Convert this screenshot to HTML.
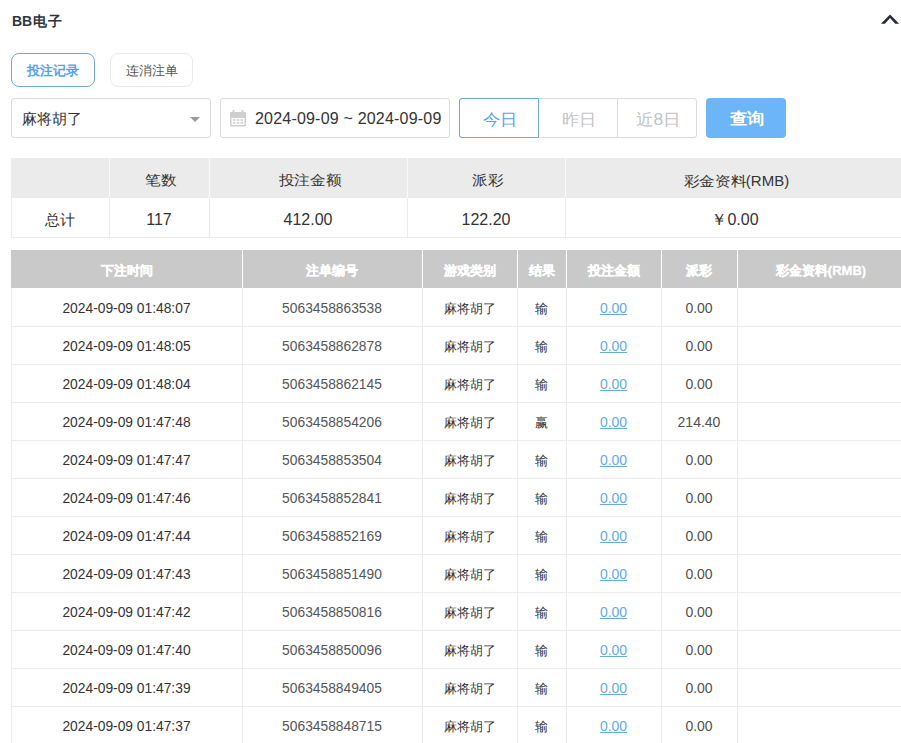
<!DOCTYPE html>
<html><head><meta charset="utf-8"><style>
*{box-sizing:border-box;margin:0;padding:0}
html,body{width:901px;height:743px;overflow:hidden;background:#fff}
body{position:relative;font-family:"Liberation Sans",sans-serif;color:#333}
.a{position:absolute;white-space:nowrap}
.title{left:12px;top:10px;font-size:14px;font-weight:bold;color:#2f3441;line-height:22px}
.tab{top:53px;height:34px;border-radius:8px;font-size:13px;line-height:34px;text-align:center}
.tab1{left:11px;width:84px;border:1px solid #74a5d8;color:#55a3ef;font-weight:bold}
.tab2{left:110px;width:83px;border:1px solid #e9e9e9;color:#555}
.sel{left:11px;top:98px;width:200px;height:40px;border:1px solid #dadada;border-radius:3px}
.selt{left:22px;top:109px;font-size:15px;line-height:20px;color:#333}
.tri{left:190px;top:117px;width:0;height:0;border-left:5px solid transparent;border-right:5px solid transparent;border-top:5px solid #9a9a9a}
.date{left:220px;top:98px;width:230px;height:40px;border:1px solid #dadada;border-radius:3px}
.datet{left:255px;top:109px;font-size:16px;line-height:20px;letter-spacing:0.2px;color:#333}
.grp{left:459px;top:98px;width:238px;height:40px;border:1px solid #dadada;border-radius:3px}
.gd{top:99px;width:1px;height:38px;background:#dadada}
.today{left:459px;top:98px;width:80px;height:40px;border:1px solid #74a5d8;border-radius:3px 0 0 3px}
.bt{top:109.5px;font-size:16px;line-height:20px;color:#c3c3c3;padding-left:2px}
.query{left:706px;top:98px;width:80px;height:40px;background:#6cb6f7;border-radius:4px}
.qt{left:730px;top:108.5px;font-size:16px;line-height:20px;color:#fff;font-weight:bold;padding-left:2px}
.c{text-align:center}
.sh{background:#ebebeb}
.vl{width:1px}
.hl{height:1px}
.lnk{color:#66a9e8;text-decoration:underline}
</style></head><body>
<div class="a title" style="">BB<span style="letter-spacing:1.2px;margin-left:1px">电子</span></div>
<svg class="a" style="left:861px;top:0px" width="40" height="40" viewBox="0 0 40 40"><path d="M19.9 23.8 L29.05 14.4 L38.2 23.8 L34.2 23.8 L29.05 17.9 L23.9 23.8 Z" fill="#272c37"/></svg>
<div class="a tab tab1" style="">投注记录</div>
<div class="a tab tab2" style="">连消注单</div>
<div class="a sel" style=""></div>
<div class="a selt" style="">麻将胡了</div>
<div class="a tri" style=""></div>
<div class="a date" style=""></div>
<svg class="a" style="left:229px;top:110px" width="18" height="18" viewBox="0 0 18 18">
<rect x="1" y="2" width="16" height="14.5" rx="1" fill="#cfcfcf"/>
<rect x="2.5" y="8" width="13" height="7" fill="#fff"/>
<rect x="4" y="9" width="2.5" height="2" fill="#d8d8d8"/><rect x="7.8" y="9" width="2.5" height="2" fill="#d8d8d8"/><rect x="11.5" y="9" width="2.5" height="2" fill="#d8d8d8"/>
<rect x="4" y="12" width="2.5" height="2" fill="#d8d8d8"/><rect x="7.8" y="12" width="2.5" height="2" fill="#d8d8d8"/><rect x="11.5" y="12" width="2.5" height="2" fill="#d8d8d8"/>
<rect x="3.5" y="0" width="2" height="4" fill="#cfcfcf"/><rect x="12.5" y="0" width="2" height="4" fill="#cfcfcf"/>
</svg>
<div class="a datet" style="">2024-09-09 ~ 2024-09-09</div>
<div class="a grp" style=""></div>
<div class="a gd" style="left:617px"></div>
<div class="a today" style=""></div>
<div class="a bt c" style="left:459px;width:80px;color:#55a3ef"><span style="display:inline-block;transform:scaleX(1.08)">今日</span></div>
<div class="a bt c" style="left:539px;width:78px"><span style="display:inline-block;transform:scaleX(1.08)">昨日</span></div>
<div class="a bt c" style="left:617px;width:80px"><span style="display:inline-block;transform:scaleX(1.1)">近8日</span></div>
<div class="a query" style=""></div>
<div class="a qt c" style="left:706px;width:80px"><span style="display:inline-block;transform:scaleX(1.08)">查询</span></div>
<div class="a sh" style="left:11px;top:158px;width:894px;height:40px"></div>
<div class="a vl" style="left:109px;top:158px;height:40px;background:#fafafa"></div>
<div class="a vl" style="left:209px;top:158px;height:40px;background:#fafafa"></div>
<div class="a vl" style="left:407px;top:158px;height:40px;background:#fafafa"></div>
<div class="a vl" style="left:565px;top:158px;height:40px;background:#fafafa"></div>
<div class="a vl" style="left:11px;top:198px;height:40px;background:#ebebeb"></div>
<div class="a vl" style="left:109px;top:198px;height:40px;background:#ebebeb"></div>
<div class="a vl" style="left:209px;top:198px;height:40px;background:#ebebeb"></div>
<div class="a vl" style="left:407px;top:198px;height:40px;background:#ebebeb"></div>
<div class="a vl" style="left:565px;top:198px;height:40px;background:#ebebeb"></div>
<div class="a hl" style="left:11px;top:237px;width:894px;background:#ebebeb"></div>
<div class="a c" style="left:11px;width:98px;top:208.5px;line-height:22px;font-size:15px;color:#333">总计</div>
<div class="a c" style="left:109px;width:100px;top:169.5px;line-height:22px;font-size:13.5px;color:#333;padding-left:3px"><span style="display:inline-block;transform:scaleX(1.12)">笔数</span></div>
<div class="a c" style="left:109px;width:100px;top:208.5px;line-height:22px;font-size:16px;color:#333">117</div>
<div class="a c" style="left:209px;width:198px;top:169.5px;line-height:22px;font-size:13.5px;color:#333;padding-left:3px"><span style="display:inline-block;transform:scaleX(1.12)">投注金额</span></div>
<div class="a c" style="left:209px;width:198px;top:208.5px;line-height:22px;font-size:16px;color:#333">412.00</div>
<div class="a c" style="left:407px;width:158px;top:169.5px;line-height:22px;font-size:13.5px;color:#333;padding-left:3px"><span style="display:inline-block;transform:scaleX(1.12)">派彩</span></div>
<div class="a c" style="left:407px;width:158px;top:208.5px;line-height:22px;font-size:16px;color:#333">122.20</div>
<div class="a c" style="left:565px;width:340px;top:169.5px;line-height:22px;font-size:13.5px;color:#333;padding-left:3px"><span style="display:inline-block;transform:scaleX(1.12);margin:0 3px">彩金资料</span><span style="font-size:15px">(RMB)</span></div>
<div class="a c" style="left:565px;width:340px;top:208.5px;line-height:22px;font-size:16px;color:#333">￥0.00</div>
<div class="a " style="left:11px;top:250px;width:894px;height:38px;background:#c9c9c9"></div>
<div class="a vl" style="left:242px;top:250px;height:38px;background:#fff"></div>
<div class="a vl" style="left:422px;top:250px;height:38px;background:#fff"></div>
<div class="a vl" style="left:517px;top:250px;height:38px;background:#fff"></div>
<div class="a vl" style="left:566px;top:250px;height:38px;background:#fff"></div>
<div class="a vl" style="left:661px;top:250px;height:38px;background:#fff"></div>
<div class="a vl" style="left:737px;top:250px;height:38px;background:#fff"></div>
<div class="a c" style="left:11px;width:231px;top:262px;line-height:18px;font-size:13px;color:#fff;font-weight:bold;-webkit-text-stroke:0.3px #fff">下注时间</div>
<div class="a c" style="left:242px;width:180px;top:262px;line-height:18px;font-size:13px;color:#fff;font-weight:bold;-webkit-text-stroke:0.3px #fff">注单编号</div>
<div class="a c" style="left:422px;width:95px;top:262px;line-height:18px;font-size:13px;color:#fff;font-weight:bold;-webkit-text-stroke:0.3px #fff">游戏类别</div>
<div class="a c" style="left:517px;width:49px;top:262px;line-height:18px;font-size:13px;color:#fff;font-weight:bold;-webkit-text-stroke:0.3px #fff">结果</div>
<div class="a c" style="left:566px;width:95px;top:262px;line-height:18px;font-size:13px;color:#fff;font-weight:bold;-webkit-text-stroke:0.3px #fff">投注金额</div>
<div class="a c" style="left:661px;width:76px;top:262px;line-height:18px;font-size:13px;color:#fff;font-weight:bold;-webkit-text-stroke:0.3px #fff">派彩</div>
<div class="a c" style="left:737px;width:168px;top:262px;line-height:18px;font-size:13px;color:#fff;font-weight:bold;-webkit-text-stroke:0.3px #fff">彩金资料(RMB)</div>
<div class="a vl" style="left:11px;top:288px;height:38px;background:#ebebeb"></div>
<div class="a vl" style="left:242px;top:288px;height:38px;background:#ebebeb"></div>
<div class="a vl" style="left:422px;top:288px;height:38px;background:#ebebeb"></div>
<div class="a vl" style="left:517px;top:288px;height:38px;background:#ebebeb"></div>
<div class="a vl" style="left:566px;top:288px;height:38px;background:#ebebeb"></div>
<div class="a vl" style="left:661px;top:288px;height:38px;background:#ebebeb"></div>
<div class="a vl" style="left:737px;top:288px;height:38px;background:#ebebeb"></div>
<div class="a hl" style="left:11px;top:326px;width:894px;background:#ebebeb"></div>
<div class="a c" style="left:11px;width:231px;top:300px;line-height:18px;font-size:13.8px;color:#333">2024-09-09 01:48:07</div>
<div class="a c" style="left:242px;width:180px;top:300px;line-height:18px;font-size:13.8px;color:#555">5063458863538</div>
<div class="a c" style="left:422px;width:95px;top:300px;line-height:18px;font-size:13px;color:#333">麻将胡了</div>
<div class="a c" style="left:517px;width:49px;top:300px;line-height:18px;font-size:13px;color:#333">输</div>
<div class="a c" style="left:566px;width:95px;top:299px;line-height:18px;font-size:14px;color:#6cb6f7"><span class="lnk">0.00</span></div>
<div class="a c" style="left:661px;width:76px;top:299px;line-height:18px;font-size:14px;color:#505050">0.00</div>
<div class="a vl" style="left:11px;top:326px;height:38px;background:#ebebeb"></div>
<div class="a vl" style="left:242px;top:326px;height:38px;background:#ebebeb"></div>
<div class="a vl" style="left:422px;top:326px;height:38px;background:#ebebeb"></div>
<div class="a vl" style="left:517px;top:326px;height:38px;background:#ebebeb"></div>
<div class="a vl" style="left:566px;top:326px;height:38px;background:#ebebeb"></div>
<div class="a vl" style="left:661px;top:326px;height:38px;background:#ebebeb"></div>
<div class="a vl" style="left:737px;top:326px;height:38px;background:#ebebeb"></div>
<div class="a hl" style="left:11px;top:364px;width:894px;background:#ebebeb"></div>
<div class="a c" style="left:11px;width:231px;top:338px;line-height:18px;font-size:13.8px;color:#333">2024-09-09 01:48:05</div>
<div class="a c" style="left:242px;width:180px;top:338px;line-height:18px;font-size:13.8px;color:#555">5063458862878</div>
<div class="a c" style="left:422px;width:95px;top:338px;line-height:18px;font-size:13px;color:#333">麻将胡了</div>
<div class="a c" style="left:517px;width:49px;top:338px;line-height:18px;font-size:13px;color:#333">输</div>
<div class="a c" style="left:566px;width:95px;top:337px;line-height:18px;font-size:14px;color:#6cb6f7"><span class="lnk">0.00</span></div>
<div class="a c" style="left:661px;width:76px;top:337px;line-height:18px;font-size:14px;color:#505050">0.00</div>
<div class="a vl" style="left:11px;top:364px;height:38px;background:#ebebeb"></div>
<div class="a vl" style="left:242px;top:364px;height:38px;background:#ebebeb"></div>
<div class="a vl" style="left:422px;top:364px;height:38px;background:#ebebeb"></div>
<div class="a vl" style="left:517px;top:364px;height:38px;background:#ebebeb"></div>
<div class="a vl" style="left:566px;top:364px;height:38px;background:#ebebeb"></div>
<div class="a vl" style="left:661px;top:364px;height:38px;background:#ebebeb"></div>
<div class="a vl" style="left:737px;top:364px;height:38px;background:#ebebeb"></div>
<div class="a hl" style="left:11px;top:402px;width:894px;background:#ebebeb"></div>
<div class="a c" style="left:11px;width:231px;top:376px;line-height:18px;font-size:13.8px;color:#333">2024-09-09 01:48:04</div>
<div class="a c" style="left:242px;width:180px;top:376px;line-height:18px;font-size:13.8px;color:#555">5063458862145</div>
<div class="a c" style="left:422px;width:95px;top:376px;line-height:18px;font-size:13px;color:#333">麻将胡了</div>
<div class="a c" style="left:517px;width:49px;top:376px;line-height:18px;font-size:13px;color:#333">输</div>
<div class="a c" style="left:566px;width:95px;top:375px;line-height:18px;font-size:14px;color:#6cb6f7"><span class="lnk">0.00</span></div>
<div class="a c" style="left:661px;width:76px;top:375px;line-height:18px;font-size:14px;color:#505050">0.00</div>
<div class="a vl" style="left:11px;top:402px;height:38px;background:#ebebeb"></div>
<div class="a vl" style="left:242px;top:402px;height:38px;background:#ebebeb"></div>
<div class="a vl" style="left:422px;top:402px;height:38px;background:#ebebeb"></div>
<div class="a vl" style="left:517px;top:402px;height:38px;background:#ebebeb"></div>
<div class="a vl" style="left:566px;top:402px;height:38px;background:#ebebeb"></div>
<div class="a vl" style="left:661px;top:402px;height:38px;background:#ebebeb"></div>
<div class="a vl" style="left:737px;top:402px;height:38px;background:#ebebeb"></div>
<div class="a hl" style="left:11px;top:440px;width:894px;background:#ebebeb"></div>
<div class="a c" style="left:11px;width:231px;top:414px;line-height:18px;font-size:13.8px;color:#333">2024-09-09 01:47:48</div>
<div class="a c" style="left:242px;width:180px;top:414px;line-height:18px;font-size:13.8px;color:#555">5063458854206</div>
<div class="a c" style="left:422px;width:95px;top:414px;line-height:18px;font-size:13px;color:#333">麻将胡了</div>
<div class="a c" style="left:517px;width:49px;top:414px;line-height:18px;font-size:13px;color:#333">赢</div>
<div class="a c" style="left:566px;width:95px;top:413px;line-height:18px;font-size:14px;color:#6cb6f7"><span class="lnk">0.00</span></div>
<div class="a c" style="left:661px;width:76px;top:413px;line-height:18px;font-size:14px;color:#505050">214.40</div>
<div class="a vl" style="left:11px;top:440px;height:38px;background:#ebebeb"></div>
<div class="a vl" style="left:242px;top:440px;height:38px;background:#ebebeb"></div>
<div class="a vl" style="left:422px;top:440px;height:38px;background:#ebebeb"></div>
<div class="a vl" style="left:517px;top:440px;height:38px;background:#ebebeb"></div>
<div class="a vl" style="left:566px;top:440px;height:38px;background:#ebebeb"></div>
<div class="a vl" style="left:661px;top:440px;height:38px;background:#ebebeb"></div>
<div class="a vl" style="left:737px;top:440px;height:38px;background:#ebebeb"></div>
<div class="a hl" style="left:11px;top:478px;width:894px;background:#ebebeb"></div>
<div class="a c" style="left:11px;width:231px;top:452px;line-height:18px;font-size:13.8px;color:#333">2024-09-09 01:47:47</div>
<div class="a c" style="left:242px;width:180px;top:452px;line-height:18px;font-size:13.8px;color:#555">5063458853504</div>
<div class="a c" style="left:422px;width:95px;top:452px;line-height:18px;font-size:13px;color:#333">麻将胡了</div>
<div class="a c" style="left:517px;width:49px;top:452px;line-height:18px;font-size:13px;color:#333">输</div>
<div class="a c" style="left:566px;width:95px;top:451px;line-height:18px;font-size:14px;color:#6cb6f7"><span class="lnk">0.00</span></div>
<div class="a c" style="left:661px;width:76px;top:451px;line-height:18px;font-size:14px;color:#505050">0.00</div>
<div class="a vl" style="left:11px;top:478px;height:38px;background:#ebebeb"></div>
<div class="a vl" style="left:242px;top:478px;height:38px;background:#ebebeb"></div>
<div class="a vl" style="left:422px;top:478px;height:38px;background:#ebebeb"></div>
<div class="a vl" style="left:517px;top:478px;height:38px;background:#ebebeb"></div>
<div class="a vl" style="left:566px;top:478px;height:38px;background:#ebebeb"></div>
<div class="a vl" style="left:661px;top:478px;height:38px;background:#ebebeb"></div>
<div class="a vl" style="left:737px;top:478px;height:38px;background:#ebebeb"></div>
<div class="a hl" style="left:11px;top:516px;width:894px;background:#ebebeb"></div>
<div class="a c" style="left:11px;width:231px;top:490px;line-height:18px;font-size:13.8px;color:#333">2024-09-09 01:47:46</div>
<div class="a c" style="left:242px;width:180px;top:490px;line-height:18px;font-size:13.8px;color:#555">5063458852841</div>
<div class="a c" style="left:422px;width:95px;top:490px;line-height:18px;font-size:13px;color:#333">麻将胡了</div>
<div class="a c" style="left:517px;width:49px;top:490px;line-height:18px;font-size:13px;color:#333">输</div>
<div class="a c" style="left:566px;width:95px;top:489px;line-height:18px;font-size:14px;color:#6cb6f7"><span class="lnk">0.00</span></div>
<div class="a c" style="left:661px;width:76px;top:489px;line-height:18px;font-size:14px;color:#505050">0.00</div>
<div class="a vl" style="left:11px;top:516px;height:38px;background:#ebebeb"></div>
<div class="a vl" style="left:242px;top:516px;height:38px;background:#ebebeb"></div>
<div class="a vl" style="left:422px;top:516px;height:38px;background:#ebebeb"></div>
<div class="a vl" style="left:517px;top:516px;height:38px;background:#ebebeb"></div>
<div class="a vl" style="left:566px;top:516px;height:38px;background:#ebebeb"></div>
<div class="a vl" style="left:661px;top:516px;height:38px;background:#ebebeb"></div>
<div class="a vl" style="left:737px;top:516px;height:38px;background:#ebebeb"></div>
<div class="a hl" style="left:11px;top:554px;width:894px;background:#ebebeb"></div>
<div class="a c" style="left:11px;width:231px;top:528px;line-height:18px;font-size:13.8px;color:#333">2024-09-09 01:47:44</div>
<div class="a c" style="left:242px;width:180px;top:528px;line-height:18px;font-size:13.8px;color:#555">5063458852169</div>
<div class="a c" style="left:422px;width:95px;top:528px;line-height:18px;font-size:13px;color:#333">麻将胡了</div>
<div class="a c" style="left:517px;width:49px;top:528px;line-height:18px;font-size:13px;color:#333">输</div>
<div class="a c" style="left:566px;width:95px;top:527px;line-height:18px;font-size:14px;color:#6cb6f7"><span class="lnk">0.00</span></div>
<div class="a c" style="left:661px;width:76px;top:527px;line-height:18px;font-size:14px;color:#505050">0.00</div>
<div class="a vl" style="left:11px;top:554px;height:38px;background:#ebebeb"></div>
<div class="a vl" style="left:242px;top:554px;height:38px;background:#ebebeb"></div>
<div class="a vl" style="left:422px;top:554px;height:38px;background:#ebebeb"></div>
<div class="a vl" style="left:517px;top:554px;height:38px;background:#ebebeb"></div>
<div class="a vl" style="left:566px;top:554px;height:38px;background:#ebebeb"></div>
<div class="a vl" style="left:661px;top:554px;height:38px;background:#ebebeb"></div>
<div class="a vl" style="left:737px;top:554px;height:38px;background:#ebebeb"></div>
<div class="a hl" style="left:11px;top:592px;width:894px;background:#ebebeb"></div>
<div class="a c" style="left:11px;width:231px;top:566px;line-height:18px;font-size:13.8px;color:#333">2024-09-09 01:47:43</div>
<div class="a c" style="left:242px;width:180px;top:566px;line-height:18px;font-size:13.8px;color:#555">5063458851490</div>
<div class="a c" style="left:422px;width:95px;top:566px;line-height:18px;font-size:13px;color:#333">麻将胡了</div>
<div class="a c" style="left:517px;width:49px;top:566px;line-height:18px;font-size:13px;color:#333">输</div>
<div class="a c" style="left:566px;width:95px;top:565px;line-height:18px;font-size:14px;color:#6cb6f7"><span class="lnk">0.00</span></div>
<div class="a c" style="left:661px;width:76px;top:565px;line-height:18px;font-size:14px;color:#505050">0.00</div>
<div class="a vl" style="left:11px;top:592px;height:38px;background:#ebebeb"></div>
<div class="a vl" style="left:242px;top:592px;height:38px;background:#ebebeb"></div>
<div class="a vl" style="left:422px;top:592px;height:38px;background:#ebebeb"></div>
<div class="a vl" style="left:517px;top:592px;height:38px;background:#ebebeb"></div>
<div class="a vl" style="left:566px;top:592px;height:38px;background:#ebebeb"></div>
<div class="a vl" style="left:661px;top:592px;height:38px;background:#ebebeb"></div>
<div class="a vl" style="left:737px;top:592px;height:38px;background:#ebebeb"></div>
<div class="a hl" style="left:11px;top:630px;width:894px;background:#ebebeb"></div>
<div class="a c" style="left:11px;width:231px;top:604px;line-height:18px;font-size:13.8px;color:#333">2024-09-09 01:47:42</div>
<div class="a c" style="left:242px;width:180px;top:604px;line-height:18px;font-size:13.8px;color:#555">5063458850816</div>
<div class="a c" style="left:422px;width:95px;top:604px;line-height:18px;font-size:13px;color:#333">麻将胡了</div>
<div class="a c" style="left:517px;width:49px;top:604px;line-height:18px;font-size:13px;color:#333">输</div>
<div class="a c" style="left:566px;width:95px;top:603px;line-height:18px;font-size:14px;color:#6cb6f7"><span class="lnk">0.00</span></div>
<div class="a c" style="left:661px;width:76px;top:603px;line-height:18px;font-size:14px;color:#505050">0.00</div>
<div class="a vl" style="left:11px;top:630px;height:38px;background:#ebebeb"></div>
<div class="a vl" style="left:242px;top:630px;height:38px;background:#ebebeb"></div>
<div class="a vl" style="left:422px;top:630px;height:38px;background:#ebebeb"></div>
<div class="a vl" style="left:517px;top:630px;height:38px;background:#ebebeb"></div>
<div class="a vl" style="left:566px;top:630px;height:38px;background:#ebebeb"></div>
<div class="a vl" style="left:661px;top:630px;height:38px;background:#ebebeb"></div>
<div class="a vl" style="left:737px;top:630px;height:38px;background:#ebebeb"></div>
<div class="a hl" style="left:11px;top:668px;width:894px;background:#ebebeb"></div>
<div class="a c" style="left:11px;width:231px;top:642px;line-height:18px;font-size:13.8px;color:#333">2024-09-09 01:47:40</div>
<div class="a c" style="left:242px;width:180px;top:642px;line-height:18px;font-size:13.8px;color:#555">5063458850096</div>
<div class="a c" style="left:422px;width:95px;top:642px;line-height:18px;font-size:13px;color:#333">麻将胡了</div>
<div class="a c" style="left:517px;width:49px;top:642px;line-height:18px;font-size:13px;color:#333">输</div>
<div class="a c" style="left:566px;width:95px;top:641px;line-height:18px;font-size:14px;color:#6cb6f7"><span class="lnk">0.00</span></div>
<div class="a c" style="left:661px;width:76px;top:641px;line-height:18px;font-size:14px;color:#505050">0.00</div>
<div class="a vl" style="left:11px;top:668px;height:38px;background:#ebebeb"></div>
<div class="a vl" style="left:242px;top:668px;height:38px;background:#ebebeb"></div>
<div class="a vl" style="left:422px;top:668px;height:38px;background:#ebebeb"></div>
<div class="a vl" style="left:517px;top:668px;height:38px;background:#ebebeb"></div>
<div class="a vl" style="left:566px;top:668px;height:38px;background:#ebebeb"></div>
<div class="a vl" style="left:661px;top:668px;height:38px;background:#ebebeb"></div>
<div class="a vl" style="left:737px;top:668px;height:38px;background:#ebebeb"></div>
<div class="a hl" style="left:11px;top:706px;width:894px;background:#ebebeb"></div>
<div class="a c" style="left:11px;width:231px;top:680px;line-height:18px;font-size:13.8px;color:#333">2024-09-09 01:47:39</div>
<div class="a c" style="left:242px;width:180px;top:680px;line-height:18px;font-size:13.8px;color:#555">5063458849405</div>
<div class="a c" style="left:422px;width:95px;top:680px;line-height:18px;font-size:13px;color:#333">麻将胡了</div>
<div class="a c" style="left:517px;width:49px;top:680px;line-height:18px;font-size:13px;color:#333">输</div>
<div class="a c" style="left:566px;width:95px;top:679px;line-height:18px;font-size:14px;color:#6cb6f7"><span class="lnk">0.00</span></div>
<div class="a c" style="left:661px;width:76px;top:679px;line-height:18px;font-size:14px;color:#505050">0.00</div>
<div class="a vl" style="left:11px;top:706px;height:38px;background:#ebebeb"></div>
<div class="a vl" style="left:242px;top:706px;height:38px;background:#ebebeb"></div>
<div class="a vl" style="left:422px;top:706px;height:38px;background:#ebebeb"></div>
<div class="a vl" style="left:517px;top:706px;height:38px;background:#ebebeb"></div>
<div class="a vl" style="left:566px;top:706px;height:38px;background:#ebebeb"></div>
<div class="a vl" style="left:661px;top:706px;height:38px;background:#ebebeb"></div>
<div class="a vl" style="left:737px;top:706px;height:38px;background:#ebebeb"></div>
<div class="a hl" style="left:11px;top:744px;width:894px;background:#ebebeb"></div>
<div class="a c" style="left:11px;width:231px;top:718px;line-height:18px;font-size:13.8px;color:#333">2024-09-09 01:47:37</div>
<div class="a c" style="left:242px;width:180px;top:718px;line-height:18px;font-size:13.8px;color:#555">5063458848715</div>
<div class="a c" style="left:422px;width:95px;top:718px;line-height:18px;font-size:13px;color:#333">麻将胡了</div>
<div class="a c" style="left:517px;width:49px;top:718px;line-height:18px;font-size:13px;color:#333">输</div>
<div class="a c" style="left:566px;width:95px;top:717px;line-height:18px;font-size:14px;color:#6cb6f7"><span class="lnk">0.00</span></div>
<div class="a c" style="left:661px;width:76px;top:717px;line-height:18px;font-size:14px;color:#505050">0.00</div>
</body></html>
